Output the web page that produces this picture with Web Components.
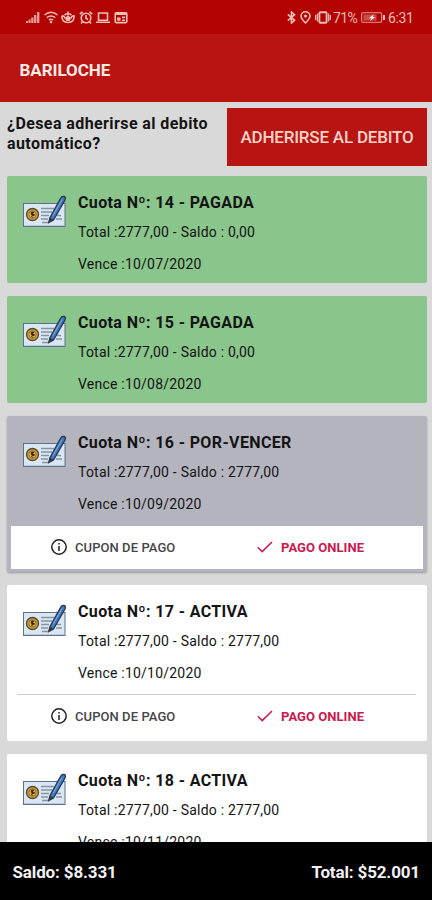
<!DOCTYPE html>
<html lang="es">
<head>
<meta charset="utf-8">
<meta name="viewport" content="width=device-width, initial-scale=1">
<title>Bariloche</title>
<style>
    body {
        margin: 0;
        background: #d9d9d9;
        font-family: Roboto, "Liberation Sans", sans-serif;
        color: #141414;
    }
</style>
</head>
<body>
<cuotas-app>
    <status-bar slot="top" battery="71%" time="6:31"></status-bar>
    <title-bar slot="top">BARILOCHE</title-bar>
    <debit-prompt action="ADHERIRSE AL DEBITO">¿Desea adherirse al debito automático?</debit-prompt>
    <cuota-card numero="14" estado="PAGADA" total="2777,00" saldo="0,00" vence="10/07/2020"></cuota-card>
    <cuota-card numero="15" estado="PAGADA" total="2777,00" saldo="0,00" vence="10/08/2020"></cuota-card>
    <cuota-card numero="16" estado="POR-VENCER" total="2777,00" saldo="2777,00" vence="10/09/2020"></cuota-card>
    <cuota-card numero="17" estado="ACTIVA" total="2777,00" saldo="2777,00" vence="10/10/2020"></cuota-card>
    <cuota-card numero="18" estado="ACTIVA" total="2777,00" saldo="2777,00" vence="10/11/2020" collapsed></cuota-card>
    <totals-bar slot="bottom" saldo="$8.331" total="$52.001"></totals-bar>
</cuotas-app>

<script>
class CuotasApp extends HTMLElement {
    constructor() {
        super();
        this.attachShadow({ mode: 'open' });
    }

    connectedCallback() {
        this.shadowRoot.innerHTML = /*html*/`
        <style>
        :host {
            display: flex;
            flex-direction: column;
            height: 100vh;
            overflow: hidden;
        }

        main {
            flex: 1;
            min-height: 0;
            overflow: hidden;
            display: flex;
            flex-direction: column;
            gap: 12.8px;
            padding: 6px 5px 0 7px;
        }
        </style>
        <slot name="top"></slot>
        <main><slot></slot></main>
        <slot name="bottom"></slot>
        `;
    }
}

class StatusBar extends HTMLElement {
    constructor() {
        super();
        this.attachShadow({ mode: 'open' });
    }

    connectedCallback() {
        this.shadowRoot.innerHTML = /*html*/`
        <style>
        :host {
            display: flex;
            justify-content: space-between;
            align-items: center;
            flex: none;
            height: 34px;
            box-sizing: border-box;
            padding: 1px 18px 0 26px;
            background: #b20201;
            color: #f3bdb5;
            font-size: 14px;
        }

        div {
            display: flex;
            align-items: center;
        }

        .left {
            gap: 3.5px;
        }

        svg {
            display: block;
            fill: none;
            stroke: currentColor;
            stroke-width: 1.6;
        }

        .solid {
            fill: currentColor;
            stroke: none;
        }

        .pin {
            margin: 0 4px;
        }

        .battery {
            margin: 0 2px 0 4px;
        }

        .percent {
            width: 24px;
            margin-left: 2px;
            letter-spacing: -0.6px;
        }

        .time {
            width: 26px;
            letter-spacing: -0.35px;
        }
        </style>
        <div class="left">
            <svg width="14" height="13" viewBox="0 0 14 13"><path class="solid" d="M0 10h2v2H0zM2.5 8.5h2.2V12H2.5zM5.2 6.5h2.3V12H5.2zM8 4h2.4v8H8zM11 1h2.4v11H11z" opacity=".8"/></svg>
            <svg width="14" height="13" viewBox="0 0 14 13"><path d="M.5 4Q7-1.5 13.5 4M2.8 6.6q4.2-3.2 8.4 0M5 9q2-1.5 4 0"/><circle class="solid" cx="7" cy="11" r="1.3"/></svg>
            <svg width="14" height="13" viewBox="0 0 14 13"><path d="M1 4.8Q.4 11.5 7 11.5t6-6.7Q10.5 5 9.8 7.5M1 4.8Q3.5 5 4.2 7.5"/><circle class="solid" cx="7" cy="7.5" r="2.6"/><path d="M7 .5v4M3.5 4q3.5-2.4 7 0"/></svg>
            <svg width="14" height="13" viewBox="0 0 14 13"><circle cx="7" cy="7" r="4.8"/><path d="M7 4v3.3l2 1.2M.8 3 3.6.8M13.2 3 10.4.8M3.5 10.8l-1.5 1.7M10.5 10.8l1.5 1.7"/></svg>
            <svg width="14" height="13" viewBox="0 0 14 13"><path d="M2.5 2h9v7.2h-9zM0 11.2h14"/></svg>
            <svg width="14" height="13" viewBox="0 0 14 13"><rect x="1.2" y="1.8" width="11.6" height="9.8" rx="1"/><path d="M1.2 3h11.6" stroke-width="2"/><path class="solid" d="M3 6.5h3.5v3.3H3zM8 5.5h3.2v1.8H8zM8 8.4h3.2V10H8z"/></svg>
        </div>
        <div>
            <svg width="9" height="13" viewBox="0 0 9 13"><path d="M.8 3.4 7.6 9.3 4.5 12V1l3.1 2.7L.8 9.6"/></svg>
            <svg class="pin" width="11" height="13" viewBox="0 0 11 13"><path d="M5.5 12Q1 7.7 1 5.1a4.5 4.3 0 0 1 9 0Q10 7.7 5.5 12z"/><circle class="solid" cx="5.5" cy="5" r="1.5"/></svg>
            <svg width="16" height="13" viewBox="0 0 16 13"><rect x="4.4" y="1.2" width="7.2" height="10.6" rx="1" stroke-width="1.9"/><path d="M2.3 2.5v8M13.7 2.5v8M.6 4v5M15.4 4v5" stroke-width="1.2"/></svg>
            <span class="percent">${this.getAttribute('battery')}</span>
            <svg class="battery" width="25" height="13" viewBox="0 0 25 13"><rect x=".7" y="1.7" width="20" height="9.6" rx="1" stroke-width="1.1" opacity=".8"/><path class="solid" d="M2.5 3.5h13v6h-13z" opacity=".4"/><path d="M23 4v5" stroke-width="2"/><path d="M13 3 8 7.3h2.6L8.8 10.2 14 6h-2.6z" fill="#fff" stroke="none"/></svg>
            <span class="time">${this.getAttribute('time')}</span>
        </div>
        `;
    }
}

class TitleBar extends HTMLElement {
    constructor() {
        super();
        this.attachShadow({ mode: 'open' });
    }

    connectedCallback() {
        this.shadowRoot.innerHTML = /*html*/`
        <style>
        :host {
            display: flex;
            align-items: center;
            flex: none;
            height: 68px;
            box-sizing: border-box;
            padding: 4px 19.5px 0;
            background: #b71412;
            color: #fdeae4;
            font-size: 17px;
            font-weight: 700;
            letter-spacing: -0.05px;
        }
        </style>
        <slot></slot>
        `;
    }
}

class DebitPrompt extends HTMLElement {
    constructor() {
        super();
        this.attachShadow({ mode: 'open' });
    }

    connectedCallback() {
        this.shadowRoot.innerHTML = /*html*/`
        <style>
        :host {
            display: flex;
            justify-content: space-between;
            flex: none;
            height: 57.5px;
            margin-bottom: -2px;
        }

        p {
            width: 212px;
            margin: 6px 0 0;
            font-size: 16px;
            line-height: 20px;
            font-weight: 700;
            letter-spacing: 0.41px;
        }

        button {
            width: 200px;
            padding: 0;
            border: 0;
            background: #b71412;
            color: #fbd3c9;
            font: inherit;
            font-size: 17px;
            font-weight: 500;
            letter-spacing: -0.2px;
        }
        </style>
        <p><slot></slot></p>
        <button>${this.getAttribute('action')}</button>
        `;
    }
}

class ChequeIcon extends HTMLElement {
    constructor() {
        super();
        this.attachShadow({ mode: 'open' });
    }

    connectedCallback() {
        this.shadowRoot.innerHTML = /*html*/`
        <style>
        :host {
            display: block;
            width: 44px;
            height: 34px;
        }

        svg {
            display: block;
        }
        </style>
        <svg width="44" height="34" viewBox="0 0 44 34">
            <rect x=".5" y="8.5" width="41.5" height="23" fill="#dbe6f5" stroke="#5d7286"/>
            <path d="M1.5 30.5H41" stroke="#b9c9dc"/>
            <circle cx="9.5" cy="19.5" r="6" fill="#c89b3c" stroke="#584a2c" stroke-width="1.3"/>
            <circle cx="9.5" cy="19.5" r="3.6" fill="#e4b850" stroke="#8a6725" stroke-width=".8"/>
            <path d="M11.1 17.7q-2.8-1.2-2.8.5t2.3 1.5-2.5 1.8M9.5 16.5v6" fill="none" stroke="#3c2d17" stroke-width="1.2"/>
            <path d="M18 13.5h13M18 17h11M18 20.5h8M18 24h7M34 20.5h4M33 24h6M19 27.5h7" stroke="#8793a0" stroke-width="1.6"/>
            <path d="m27 22.5 10.5-19q1.3-2.6 3.5-2t1 3.5L30.5 25l-4.7 2.5z" fill="#4579b8" stroke="#203654" stroke-width="1.3"/>
            <path d="M30 20.5 39 4.5" stroke="#85add9"/>
            <path d="m27 22.5 3.5 2.2-5.2 3z" fill="#373a3d"/>
        </svg>
        `;
    }
}

class CuotaCard extends HTMLElement {
    constructor() {
        super();
        this.attachShadow({ mode: 'open' });
    }

    get estado() {
        return this.getAttribute('estado');
    }

    get actions() {
        // paid installments have nothing left to do
        if (this.estado === 'PAGADA' || this.hasAttribute('collapsed')) return '';
        return /*html*/`
        <div class="actions">
            <span class="coupon">
                <svg width="18" height="18" viewBox="0 0 18 18"><circle cx="9" cy="9" r="7.2"/><path d="M9 8v5M9 4.9v1.7"/></svg>
                CUPON DE PAGO
            </span>
            <span class="online">
                <svg width="16" height="12" viewBox="0 0 16 12"><path d="m.8 6.3 4.4 4.3L15 1"/></svg>
                PAGO ONLINE
            </span>
        </div>`;
    }

    connectedCallback() {
        this.shadowRoot.innerHTML = /*html*/`
        <style>
        :host {
            display: block;
            flex: none;
            border-radius: 2px;
            background: #fff;
        }

        :host([estado="PAGADA"]) {
            background: #8ac58b;
        }

        :host([estado="POR-VENCER"]) {
            background: #b4b4bf;
            box-shadow: 0 1px 2px rgba(0, 0, 0, .3);
        }

        .body {
            display: flex;
            gap: 11px;
            height: 107px;
            box-sizing: border-box;
            padding: 16px 0 0 16px;
        }

        cheque-icon {
            flex: none;
            margin-top: 3px;
        }

        h2, p {
            margin: 0;
            white-space: nowrap;
        }

        h2 {
            font-size: 16px;
            line-height: 21px;
            font-weight: 700;
            letter-spacing: 0.37px;
        }

        p {
            margin-top: 10px;
            font-size: 14px;
            line-height: 19px;
            font-weight: 400;
            letter-spacing: 0.22px;
        }

        p + p {
            margin-top: 13px;
        }

        .actions {
            display: flex;
            height: 44px;
            box-sizing: border-box;
            margin: 2px 11px 3.5px 10px;
            border-top: 1px solid #cecece;
            font-size: 13px;
        }

        :host([estado="POR-VENCER"]) .actions {
            height: 43px;
            margin: 3px 4px;
            border: 0;
            background: #fff;
        }

        .actions span {
            display: flex;
            align-items: center;
        }

        .coupon {
            width: 207px;
            box-sizing: border-box;
            padding-left: 33px;
            gap: 7px;
            color: #454545;
            font-weight: 500;
            letter-spacing: 0.07px;
        }

        :host([estado="POR-VENCER"]) .coupon {
            width: 213px;
            padding-left: 39px;
        }

        .online {
            padding-left: 33px;
            gap: 8px;
            color: #c91950;
            font-weight: 700;
            letter-spacing: 0.05px;
        }

        svg {
            fill: none;
            stroke: currentColor;
            stroke-width: 1.5;
        }

        .coupon svg {
            stroke: #222;
        }
        </style>
        <div class="body">
            <cheque-icon></cheque-icon>
            <div>
                <h2>Cuota Nº: ${this.getAttribute('numero')} - ${this.estado}</h2>
                <p>Total :${this.getAttribute('total')} - Saldo : ${this.getAttribute('saldo')}</p>
                <p>Vence :${this.getAttribute('vence')}</p>
            </div>
        </div>
        ${this.actions}
        `;
    }
}

class TotalsBar extends HTMLElement {
    constructor() {
        super();
        this.attachShadow({ mode: 'open' });
    }

    connectedCallback() {
        this.shadowRoot.innerHTML = /*html*/`
        <style>
        :host {
            display: flex;
            justify-content: space-between;
            align-items: center;
            flex: none;
            height: 58px;
            box-sizing: border-box;
            padding: 2px 12px 0 12.5px;
            background: #000;
            color: #f2f2f2;
            font-size: 17px;
            font-weight: 700;
            letter-spacing: -0.14px;
        }
        </style>
        <span>Saldo: ${this.getAttribute('saldo')}</span>
        <span>Total: ${this.getAttribute('total')}</span>
        `;
    }
}

customElements.define('cuotas-app', CuotasApp);
customElements.define('status-bar', StatusBar);
customElements.define('title-bar', TitleBar);
customElements.define('debit-prompt', DebitPrompt);
customElements.define('cheque-icon', ChequeIcon);
customElements.define('cuota-card', CuotaCard);
customElements.define('totals-bar', TotalsBar);
</script>
</body>
</html>
